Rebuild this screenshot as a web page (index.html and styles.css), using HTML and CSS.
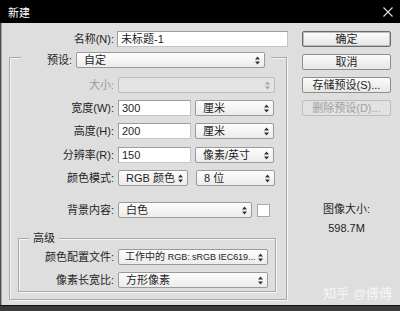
FILE: index.html
```html
<!DOCTYPE html>
<html lang="zh-CN">
<head>
<meta charset="utf-8">
<title>新建</title>
<link rel="stylesheet" href="styles.css">
</head>
<body>
<div class="window">
  <div class="titlebar">
    <span class="title">新建</span>
    <svg class="close" width="10" height="10" viewBox="0 0 10 10"><path d="M0.5 0.5 L9.5 9.5 M9.5 0.5 L0.5 9.5" stroke="#d8d8d8" stroke-width="1.2" fill="none"/></svg>
  </div>
  <div class="body">
    <div class="main">
      <div class="row name-row">
        <span class="label lw-name">名称(N):</span>
        <div class="input w-name">未标题-1</div>
      </div>
      <div class="group">
        <div class="preset">
          <span class="label lw-preset">预设:</span>
          <div class="select w-preset"><span>自定</span><svg class="arrow" width="5" height="9" viewBox="0 0 5 9"><path d="M0 3.5 L2.5 0.5 L5 3.5Z M0 5.5 L2.5 8.5 L5 5.5Z"/></svg></div>
        </div>
        <div class="row r-size">
          <span class="label lw-group dim">大小:</span>
          <div class="select disabled w-size"><span></span><svg class="arrow" width="5" height="9" viewBox="0 0 5 9"><path d="M0 3.5 L2.5 0.5 L5 3.5Z M0 5.5 L2.5 8.5 L5 5.5Z"/></svg></div>
        </div>
        <div class="row r-std">
          <span class="label lw-group">宽度(W):</span>
          <div class="input w-num">300</div>
          <div class="select w-unit"><span>厘米</span><svg class="arrow" width="5" height="9" viewBox="0 0 5 9"><path d="M0 3.5 L2.5 0.5 L5 3.5Z M0 5.5 L2.5 8.5 L5 5.5Z"/></svg></div>
        </div>
        <div class="row r-std">
          <span class="label lw-group">高度(H):</span>
          <div class="input w-num">200</div>
          <div class="select w-unit"><span>厘米</span><svg class="arrow" width="5" height="9" viewBox="0 0 5 9"><path d="M0 3.5 L2.5 0.5 L5 3.5Z M0 5.5 L2.5 8.5 L5 5.5Z"/></svg></div>
        </div>
        <div class="row r-res">
          <span class="label lw-group">分辨率(R):</span>
          <div class="input w-num">150</div>
          <div class="select w-unit"><span>像素/英寸</span><svg class="arrow" width="5" height="9" viewBox="0 0 5 9"><path d="M0 3.5 L2.5 0.5 L5 3.5Z M0 5.5 L2.5 8.5 L5 5.5Z"/></svg></div>
        </div>
        <div class="row r-std">
          <span class="label lw-group">颜色模式:</span>
          <div class="select w-mode"><span>RGB 颜色</span><svg class="arrow" width="5" height="9" viewBox="0 0 5 9"><path d="M0 3.5 L2.5 0.5 L5 3.5Z M0 5.5 L2.5 8.5 L5 5.5Z"/></svg></div>
          <div class="select w-bits"><span>8 位</span><svg class="arrow" width="5" height="9" viewBox="0 0 5 9"><path d="M0 3.5 L2.5 0.5 L5 3.5Z M0 5.5 L2.5 8.5 L5 5.5Z"/></svg></div>
        </div>
        <div class="row r-bg">
          <span class="label lw-group">背景内容:</span>
          <div class="select w-bg"><span>白色</span><svg class="arrow" width="5" height="9" viewBox="0 0 5 9"><path d="M0 3.5 L2.5 0.5 L5 3.5Z M0 5.5 L2.5 8.5 L5 5.5Z"/></svg></div>
          <div class="swatch"></div>
        </div>
        <div class="adv">
          <div class="adv-title">高级</div>
          <div class="row r-prof">
            <span class="label lw-adv">颜色配置文件:</span>
            <div class="select w-prof tightsel"><span class="tight">工作中的 <span class="latin">RGB: sRGB IEC619...</span></span><svg class="arrow" width="5" height="9" viewBox="0 0 5 9"><path d="M0 3.5 L2.5 0.5 L5 3.5Z M0 5.5 L2.5 8.5 L5 5.5Z"/></svg></div>
          </div>
          <div class="row r-std">
            <span class="label lw-adv">像素长宽比:</span>
            <div class="select w-prof"><span>方形像素</span><svg class="arrow" width="5" height="9" viewBox="0 0 5 9"><path d="M0 3.5 L2.5 0.5 L5 3.5Z M0 5.5 L2.5 8.5 L5 5.5Z"/></svg></div>
          </div>
        </div>
      </div>
    </div>
    <div class="side">
      <div class="btn default">确定</div>
      <div class="btn">取消</div>
      <div class="btn">存储预设(S)...</div>
      <div class="btn off">删除预设(D)...</div>
      <div class="imgsize">
        <div>图像大小:</div>
        <div class="val">598.7M</div>
      </div>
      <div class="watermark">知乎 @傅傅</div>
    </div>
  </div>
  <div class="bottom"></div>
</div>
</body>
</html>
```

FILE: styles.css
```css
* { box-sizing: border-box; }
html, body { margin: 0; padding: 0; }
body {
  width: 400px;
  height: 311px;
  overflow: hidden;
  font-family: "Liberation Sans", "Noto Sans CJK SC", sans-serif;
  font-size: 11px;
  color: #1e1e1e;
  background: #dedede;
}
.window { width: 400px; height: 311px; display: flex; flex-direction: column; }
.titlebar {
  height: 23px;
  background: #000;
  color: #fff;
  display: flex;
  align-items: center;
  justify-content: space-between;
  padding: 0 7px 0 8px;
  font-size: 11px;
}
.close { display: block; }
.body {
  height: 282px;
  display: flex;
  background: #dedede;
  box-shadow: inset 1px 0 0 #4a4a4a, inset 2px 0 0 #a8a8a8;
}
.bottom {
  height: 6px;
  background: #3a3a3a;
  border-top: 1px solid #111;
}
.main { width: 302px; padding-top: 8px; }
.row { display: flex; align-items: center; height: 16px; gap: 4px; }
.label { text-align: right; white-space: nowrap; flex: none; line-height: 16px; }
.dim { color: #9a9a9a; }
.lw-name { width: 114px; }
.name-row { gap: 3px; margin-bottom: 10px; }
.lw-group { width: 104px; }
.lw-adv { width: 95px; }
.lw-preset { width: 45px; }

.input {
  height: 16px;
  background: #fff;
  border: 1px solid #9c9c9c;
  border-bottom-color: #c4c4c4;
  border-right-color: #c4c4c4;
  padding-left: 3px;
  line-height: 14px;
  white-space: nowrap;
  flex: none;
}
.w-name { width: 171px; }
.w-num { width: 73px; }

.select {
  height: 16px;
  display: flex;
  align-items: center;
  justify-content: space-between;
  gap: 3px;
  padding: 0 4px 0 7px;
  border: 1px solid #9a9a9a;
  border-radius: 2px;
  background: linear-gradient(#fdfdfd, #ececec);
  white-space: nowrap;
  flex: none;
  line-height: 14px;
}
.select > span { overflow: hidden; min-width: 0; }
.tightsel { gap: 1px; padding-left: 6px; }
.select .tight { font-size: 10px; }
.select .latin { font-size: 9px; letter-spacing: -0.05px; }
.select .arrow { fill: #333; flex: none; }
.select.disabled { background: #e3e3e3; border-color: #bcbcbc; }
.select.disabled .arrow { fill: #a6a6a6; }
.w-preset { width: 189px; }
.w-size { width: 157px; }
.w-unit { width: 79px; }
.w-mode { width: 70px; margin-right: 4px; }
.w-bits { width: 79px; }
.w-bg { width: 134px; }
.w-prof { width: 150px; }
.swatch {
  width: 13px;
  height: 13px;
  background: #fff;
  border: 1px solid #a8a8a8;
  margin-left: 1px;
}

.group {
  margin-left: 9px;
  width: 278px;
  border: 1px solid #a9a9a9;
  box-shadow: inset 1px 1px 0 #f4f4f4, 1px 1px 0 #f4f4f4;
  padding-bottom: 7px;
}
.preset {
  display: flex;
  align-items: center;
  gap: 4px;
  width: max-content;
  margin: -6px 0 0 11px;
  padding: 0 6px;
  background: #dedede;
  height: 16px;
}
.r-size { margin-top: 9px; }
.r-std { margin-top: 7px; }
.r-res { margin-top: 8px; }
.r-bg { margin-top: 16px; }
.r-prof { margin-top: 4px; }

.adv {
  margin: 20px 0 0 8px;
  width: 258px;
  border: 1px solid #a9a9a9;
  box-shadow: inset 1px 1px 0 #f4f4f4, 1px 1px 0 #f4f4f4;
  padding-bottom: 3px;
}
.adv-title {
  width: max-content;
  margin: -7px 0 0 10px;
  padding: 0 4px;
  height: 13px;
  line-height: 13px;
  background: #dedede;
}

.side {
  width: 89px;
  padding: 8px 0 4px;
  display: flex;
  flex-direction: column;
}
.btn {
  height: 16px;
  margin-bottom: 7px;
  border: 1px solid #8e8e8e;
  border-radius: 2px;
  background: linear-gradient(#fbfbfb, #e6e6e6);
  text-align: center;
  line-height: 14px;
  white-space: nowrap;
}
.btn.default { border-color: #6a6a6a; box-shadow: inset 0 0 0 1px #bdbdbd; }
.btn.off { color: #a0a0a0; border-color: #bcbcbc; background: #e2e2e2; }
.imgsize {
  margin-top: 80px;
  text-align: center;
  line-height: 13px;
}
.imgsize .val { margin-top: 6px; }
.watermark {
  margin-top: auto;
  text-align: right;
  font-size: 13px;
  line-height: 15px;
  color: rgba(255,255,255,0.75);
  margin-right: -1px;
}
```
